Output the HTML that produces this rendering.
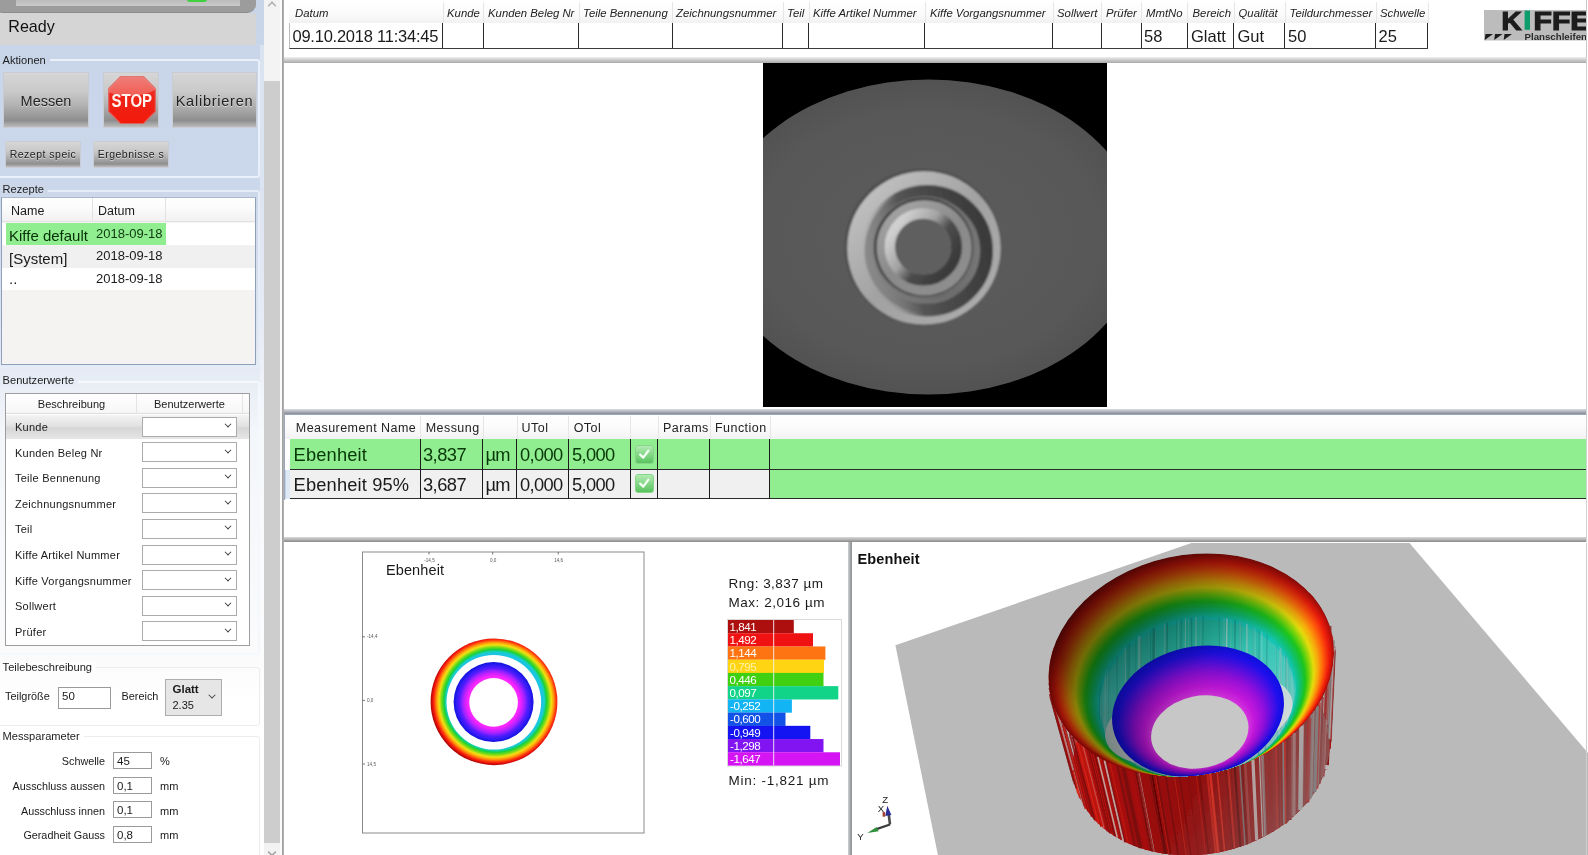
<!DOCTYPE html>
<html lang="de"><head><meta charset="utf-8"><title>Kiffe Planschleifen – Ebenheit</title>
<style>
*{box-sizing:border-box;margin:0;padding:0}
html,body{width:1588px;height:855px;overflow:hidden;background:#fff}
body{font-family:"Liberation Sans",sans-serif;color:#1a1a1a;position:relative}
#app{position:absolute;left:0;top:0;width:1588px;height:855px;overflow:hidden;background:#fff;will-change:transform;-webkit-font-smoothing:antialiased}
.abs{position:absolute}
.t{position:absolute;white-space:nowrap;line-height:1}
/* left panel */
#left{left:0;top:0;width:264px;height:855px;background:linear-gradient(to bottom,#c8d5e9 0px,#cbd7ea 180px,#dde5f1 340px,#e9eef6 385px,#f3f6fa 430px,#fbfbfc 660px,#ffffff 700px)}
.gl{font-size:11.1px;color:#1c1c1c}
.btn{position:absolute;border:1px solid #c9cdd3;background:linear-gradient(to bottom,#d6d6d6 0%,#c9c9c9 35%,#b2b2b2 60%,#8e8e8e 88%,#bdbdbd 100%);text-align:center;color:#222;text-shadow:0 1px 0 rgba(255,255,255,.55)}
.cmb{position:absolute;left:142px;width:95px;height:20px;background:#fff;border:1px solid #ababab}
.cmb i{position:absolute;right:5.5px;top:3.5px;width:6px;height:6px;border-right:1.6px solid #333;border-bottom:1.6px solid #333;transform:rotate(45deg) scale(.8);transform-origin:center}
.tb{position:absolute;background:#fff;border:1px solid #9a9a9a;font-size:12px;line-height:1}
.gb{position:absolute;border:1px solid rgba(255,255,255,.9);border-radius:3px}
</style></head>
<body><div id="app">
<div class="abs" style="left:289px;top:0;width:1139px;height:23px;background:linear-gradient(#ffffff,#fbfbfb 60%,#f1f1f1)"></div>
<div class="abs" style="left:442.5px;top:2px;width:1px;height:21px;background:#e6e6e6"></div>
<div class="abs" style="left:483.0px;top:2px;width:1px;height:21px;background:#e6e6e6"></div>
<div class="abs" style="left:578.5px;top:2px;width:1px;height:21px;background:#e6e6e6"></div>
<div class="abs" style="left:672.0px;top:2px;width:1px;height:21px;background:#e6e6e6"></div>
<div class="abs" style="left:782.5px;top:2px;width:1px;height:21px;background:#e6e6e6"></div>
<div class="abs" style="left:808.5px;top:2px;width:1px;height:21px;background:#e6e6e6"></div>
<div class="abs" style="left:924.5px;top:2px;width:1px;height:21px;background:#e6e6e6"></div>
<div class="abs" style="left:1052.5px;top:2px;width:1px;height:21px;background:#e6e6e6"></div>
<div class="abs" style="left:1101.0px;top:2px;width:1px;height:21px;background:#e6e6e6"></div>
<div class="abs" style="left:1141.0px;top:2px;width:1px;height:21px;background:#e6e6e6"></div>
<div class="abs" style="left:1187.0px;top:2px;width:1px;height:21px;background:#e6e6e6"></div>
<div class="abs" style="left:1233.5px;top:2px;width:1px;height:21px;background:#e6e6e6"></div>
<div class="abs" style="left:1284.5px;top:2px;width:1px;height:21px;background:#e6e6e6"></div>
<div class="abs" style="left:1375.5px;top:2px;width:1px;height:21px;background:#e6e6e6"></div>
<div class="abs" style="left:1427.5px;top:2px;width:1px;height:21px;background:#e6e6e6"></div>
<div class="t" style="left:295.0px;top:8.4px;font-size:11.35px;font-style:italic;color:#222">Datum</div>
<div class="t" style="left:447.0px;top:8.4px;font-size:11.35px;font-style:italic;color:#222">Kunde</div>
<div class="t" style="left:488.0px;top:8.4px;font-size:11.35px;font-style:italic;color:#222">Kunden Beleg Nr</div>
<div class="t" style="left:583.0px;top:8.4px;font-size:11.35px;font-style:italic;color:#222">Teile Bennenung</div>
<div class="t" style="left:676.0px;top:8.4px;font-size:11.35px;font-style:italic;color:#222">Zeichnungsnummer</div>
<div class="t" style="left:787.0px;top:8.4px;font-size:11.35px;font-style:italic;color:#222">Teil</div>
<div class="t" style="left:813.0px;top:8.4px;font-size:11.35px;font-style:italic;color:#222">Kiffe Artikel Nummer</div>
<div class="t" style="left:930.0px;top:8.4px;font-size:11.35px;font-style:italic;color:#222">Kiffe Vorgangsnummer</div>
<div class="t" style="left:1057.0px;top:8.4px;font-size:11.35px;font-style:italic;color:#222">Sollwert</div>
<div class="t" style="left:1106.0px;top:8.4px;font-size:11.35px;font-style:italic;color:#222">Prüfer</div>
<div class="t" style="left:1146.0px;top:8.4px;font-size:11.35px;font-style:italic;color:#222">MmtNo</div>
<div class="t" style="left:1192.5px;top:8.4px;font-size:11.35px;font-style:italic;color:#222">Bereich</div>
<div class="t" style="left:1238.5px;top:8.4px;font-size:11.35px;font-style:italic;color:#222">Qualität</div>
<div class="t" style="left:1289.5px;top:8.4px;font-size:11.35px;font-style:italic;color:#222">Teildurchmesser</div>
<div class="t" style="left:1380.0px;top:8.4px;font-size:11.35px;font-style:italic;color:#222">Schwelle</div>
<div class="abs" style="left:289px;top:23px;width:1139px;height:25.5px;border-left:1px solid #bdbdbd;border-bottom:1.6px solid #3a3a3a;background:#fff"></div>
<div class="abs" style="left:442.2px;top:23px;width:1.2px;height:25px;background:#2a2a2a"></div>
<div class="abs" style="left:482.7px;top:23px;width:1.2px;height:25px;background:#2a2a2a"></div>
<div class="abs" style="left:578.2px;top:23px;width:1.2px;height:25px;background:#2a2a2a"></div>
<div class="abs" style="left:671.7px;top:23px;width:1.2px;height:25px;background:#2a2a2a"></div>
<div class="abs" style="left:782.2px;top:23px;width:1.2px;height:25px;background:#2a2a2a"></div>
<div class="abs" style="left:808.2px;top:23px;width:1.2px;height:25px;background:#2a2a2a"></div>
<div class="abs" style="left:924.2px;top:23px;width:1.2px;height:25px;background:#2a2a2a"></div>
<div class="abs" style="left:1052.2px;top:23px;width:1.2px;height:25px;background:#2a2a2a"></div>
<div class="abs" style="left:1100.7px;top:23px;width:1.2px;height:25px;background:#2a2a2a"></div>
<div class="abs" style="left:1140.7px;top:23px;width:1.2px;height:25px;background:#2a2a2a"></div>
<div class="abs" style="left:1186.7px;top:23px;width:1.2px;height:25px;background:#2a2a2a"></div>
<div class="abs" style="left:1233.2px;top:23px;width:1.2px;height:25px;background:#2a2a2a"></div>
<div class="abs" style="left:1284.2px;top:23px;width:1.2px;height:25px;background:#2a2a2a"></div>
<div class="abs" style="left:1375.2px;top:23px;width:1.2px;height:25px;background:#2a2a2a"></div>
<div class="abs" style="left:1427.2px;top:23px;width:1.2px;height:25px;background:#2a2a2a"></div>
<div class="t" style="left:292.5px;top:28.4px;font-size:16.5px;color:#1a1a1a;letter-spacing:-.24px">09.10.2018 11:34:45</div>
<div class="t" style="left:1144.0px;top:28.4px;font-size:16.5px;color:#1a1a1a;">58</div>
<div class="t" style="left:1191.0px;top:28.4px;font-size:16.5px;color:#1a1a1a;">Glatt</div>
<div class="t" style="left:1237.5px;top:28.4px;font-size:16.5px;color:#1a1a1a;">Gut</div>
<div class="t" style="left:1288.0px;top:28.4px;font-size:16.5px;color:#1a1a1a;">50</div>
<div class="t" style="left:1378.5px;top:28.4px;font-size:16.5px;color:#1a1a1a;">25</div>
<svg class="abs" style="left:1480px;top:6px" width="108" height="40" viewBox="1480 6 108 40"><rect x="1484" y="10" width="102" height="30.5" fill="#bcbcbc"/><text x="1501.5" y="30" font-family="Liberation Sans, sans-serif" font-weight="bold" font-size="28" fill="#1c1c1c" stroke="#1c1c1c" stroke-width="1.3" textLength="20" lengthAdjust="spacingAndGlyphs" transform="translate(0 30) scale(1 .92) translate(0 -30)">K</text><rect x="1524.6" y="10.6" width="5.4" height="19.2" fill="#0d9d6c"/><text x="1533.5" y="30" font-family="Liberation Sans, sans-serif" font-weight="bold" font-size="28" fill="#1c1c1c" stroke="#1c1c1c" stroke-width="1.3" textLength="57" lengthAdjust="spacingAndGlyphs" transform="translate(0 30) scale(1 .92) translate(0 -30)">FFE</text><path d="M1485.5 34 h7.5 l-7.5 6z M1495 34 h7.5 l-7.5 6z M1504.5 34 h7.5 l-7.5 6z" fill="#1c1c1c" transform="skewX(-8) translate(4.8 0)"/><text x="1524.5" y="39.6" font-family="Liberation Sans, sans-serif" font-weight="bold" font-size="8.6" fill="#2a2a2a" textLength="62.5" lengthAdjust="spacingAndGlyphs">Planschleifen</text></svg>
<div class="abs" style="left:1586px;top:0;width:2px;height:57px;background:#fff;border-left:1px solid #c9c9c9"></div>
<div class="abs" style="left:284px;top:57px;width:1302px;height:6px;background:linear-gradient(#f0f0f0,#d2d2d2 40%,#a9a9a9)"></div>
<svg class="abs" style="left:763px;top:63px" width="344" height="344" viewBox="763 63 344 344">
<defs><radialGradient id="cbg" cx="50%" cy="50%" r="50%"><stop offset="0" stop-color="#5c5c5c"/><stop offset=".8" stop-color="#585858"/><stop offset="1" stop-color="#525252"/></radialGradient><linearGradient id="r1" x1="0.15" y1="0.15" x2="0.85" y2="0.85"><stop offset="0" stop-color="#bebebe"/><stop offset=".5" stop-color="#a2a2a2"/><stop offset="1" stop-color="#aaaaaa"/></linearGradient><linearGradient id="r2" x1="0" y1="0.62" x2="1" y2="0.38"><stop offset="0" stop-color="#8a8a8a" stop-opacity="0"/><stop offset=".16" stop-color="#707070" stop-opacity=".25"/><stop offset=".36" stop-color="#525252" stop-opacity=".95"/><stop offset=".6" stop-color="#484848"/><stop offset="1" stop-color="#3a3a3a"/></linearGradient><linearGradient id="r5" x1="0" y1="0.55" x2="1" y2="0.45"><stop offset="0" stop-color="#8a8a8a"/><stop offset=".2" stop-color="#808080"/><stop offset=".45" stop-color="#747474"/><stop offset=".7" stop-color="#6c6c6c"/><stop offset="1" stop-color="#808080"/></linearGradient><linearGradient id="r6" x1="0" y1="0.55" x2="1" y2="0.45"><stop offset="0" stop-color="#7e7e7e"/><stop offset=".3" stop-color="#747474"/><stop offset=".6" stop-color="#6a6a6a"/><stop offset="1" stop-color="#747474"/></linearGradient><linearGradient id="r3" x1="0.2" y1="0.1" x2="0.8" y2="0.9"><stop offset="0" stop-color="#a2a2a2"/><stop offset=".5" stop-color="#8a8a8a"/><stop offset="1" stop-color="#8e8e8e"/></linearGradient><linearGradient id="r4" x1="0.1" y1="0.2" x2="0.9" y2="0.8"><stop offset="0" stop-color="#cfcfcf"/><stop offset=".38" stop-color="#a2a2a2"/><stop offset=".62" stop-color="#4c4c4c"/><stop offset="1" stop-color="#3a3a3a"/></linearGradient><filter id="bl" x="-10%" y="-10%" width="120%" height="120%"><feGaussianBlur stdDeviation="1.3"/></filter><clipPath id="cclip"><rect x="763" y="63" width="344" height="344"/></clipPath></defs>
<rect x="763" y="63" width="344" height="344" fill="#000"/>
<g clip-path="url(#cclip)">
<ellipse cx="928.5" cy="237" rx="212.5" ry="157.5" fill="url(#cbg)"/>
<g filter="url(#bl)">
<circle cx="923.2" cy="247.2" r="78.3" fill="#484848"/>
<circle cx="924" cy="248" r="76.8" fill="url(#r1)"/>
<circle cx="927.5" cy="250.5" r="63" fill="url(#r5)"/>
<circle cx="927.2" cy="250.8" r="59.3" fill="none" stroke="url(#r2)" stroke-width="13"/>
<circle cx="925" cy="248.5" r="52.5" fill="url(#r6)"/>
<circle cx="923.6" cy="247.2" r="49.6" fill="#404040"/>
<circle cx="924.2" cy="247.8" r="47.6" fill="url(#r3)"/>
<circle cx="923.3" cy="246.9" r="33.2" fill="none" stroke="url(#r4)" stroke-width="11"/>
<circle cx="923" cy="246.7" r="28" fill="#5f5f5f"/>
</g></g></svg>
<div class="abs" style="left:284px;top:408.5px;width:1302px;height:5.6px;background:linear-gradient(#d8dbe0,#b6b9c0 45%,#868992)"></div>
<div class="abs" style="left:284px;top:414px;width:1302.5px;height:86px;border:1px solid #9aa7bd;border-bottom:none;background:#fff"></div>
<div class="abs" style="left:285px;top:415px;width:1300.5px;height:24px;background:linear-gradient(#ffffff,#fbfbfb 55%,#f2f2f2)"></div>
<div class="t" style="left:295.8px;top:421.5px;font-size:12.5px;color:#222;letter-spacing:.45px">Measurement Name</div>
<div class="t" style="left:425.7px;top:421.5px;font-size:12.5px;color:#222;letter-spacing:.45px">Messung</div>
<div class="t" style="left:521.6px;top:421.5px;font-size:12.5px;color:#222;letter-spacing:.45px">UTol</div>
<div class="t" style="left:573.7px;top:421.5px;font-size:12.5px;color:#222;letter-spacing:.45px">OTol</div>
<div class="t" style="left:663.0px;top:421.5px;font-size:12.5px;color:#222;letter-spacing:.45px">Params</div>
<div class="t" style="left:715.0px;top:421.5px;font-size:12.5px;color:#222;letter-spacing:.45px">Function</div>
<div class="abs" style="left:420.0px;top:416px;width:1px;height:23px;background:#e6e6e6"></div>
<div class="abs" style="left:482.5px;top:416px;width:1px;height:23px;background:#e6e6e6"></div>
<div class="abs" style="left:516.5px;top:416px;width:1px;height:23px;background:#e6e6e6"></div>
<div class="abs" style="left:568.0px;top:416px;width:1px;height:23px;background:#e6e6e6"></div>
<div class="abs" style="left:630.0px;top:416px;width:1px;height:23px;background:#e6e6e6"></div>
<div class="abs" style="left:657.5px;top:416px;width:1px;height:23px;background:#e6e6e6"></div>
<div class="abs" style="left:709.5px;top:416px;width:1px;height:23px;background:#e6e6e6"></div>
<div class="abs" style="left:769.5px;top:416px;width:1px;height:23px;background:#e6e6e6"></div>
<div class="abs" style="left:290px;top:439px;width:1295.5px;height:30px;background:#90ee90"></div>
<div class="abs" style="left:290px;top:469.5px;width:480px;height:29px;background:#f0f0f0"></div>
<div class="abs" style="left:769.5px;top:469.5px;width:816px;height:29px;background:#90ee90"></div>
<div class="abs" style="left:290px;top:468.8px;width:1295.5px;height:1.2px;background:#2b2b2b"></div>
<div class="abs" style="left:290px;top:497.8px;width:1295.5px;height:1.4px;background:#2b2b2b"></div>
<div class="abs" style="left:419.8px;top:439px;width:1.2px;height:59.5px;background:#1c1c1c"></div>
<div class="abs" style="left:482.3px;top:439px;width:1.2px;height:59.5px;background:#1c1c1c"></div>
<div class="abs" style="left:516.3px;top:439px;width:1.2px;height:59.5px;background:#1c1c1c"></div>
<div class="abs" style="left:567.8px;top:439px;width:1.2px;height:59.5px;background:#1c1c1c"></div>
<div class="abs" style="left:629.8px;top:439px;width:1.2px;height:59.5px;background:#1c1c1c"></div>
<div class="abs" style="left:657.3px;top:439px;width:1.2px;height:59.5px;background:#1c1c1c"></div>
<div class="abs" style="left:709.3px;top:439px;width:1.2px;height:59.5px;background:#1c1c1c"></div>
<div class="abs" style="left:769.3px;top:439px;width:1.2px;height:59.5px;background:#1c1c1c"></div>
<div class="t" style="left:293.6px;top:446.1px;font-size:18.3px;color:#083808;letter-spacing:.15px">Ebenheit</div>
<div class="t" style="left:423px;top:446.1px;font-size:18.3px;letter-spacing:-.55px;color:#083808">3,837</div>
<div class="t" style="left:485.4px;top:446.1px;font-size:18.3px;letter-spacing:-.6px;color:#083808">µm</div>
<div class="t" style="left:520px;top:446.1px;font-size:18.3px;color:#083808;letter-spacing:-.62px">0,000</div>
<div class="t" style="left:572px;top:446.1px;font-size:18.3px;color:#083808;letter-spacing:-.62px">5,000</div>
<svg class="abs" style="left:634.5px;top:444.8px" width="19" height="19" viewBox="0 0 19 19"><defs><linearGradient id="ck0" x1="0" y1="0" x2="0" y2="1"><stop offset="0" stop-color="#b4ecb4"/><stop offset="1" stop-color="#56c25c"/></linearGradient></defs><rect x=".5" y=".5" width="18" height="18" rx="2.5" fill="url(#ck0)" stroke="#86d68a"/><path d="M5.2 9.6 L8.3 12.6 L13.4 5.6" fill="none" stroke="#f4fff4" stroke-width="2.3" stroke-linecap="round" stroke-linejoin="round"/></svg>
<div class="t" style="left:293.6px;top:475.9px;font-size:18.3px;color:#1a1a1a;letter-spacing:.15px">Ebenheit 95%</div>
<div class="t" style="left:423px;top:475.9px;font-size:18.3px;letter-spacing:-.55px;color:#1a1a1a">3,687</div>
<div class="t" style="left:485.4px;top:475.9px;font-size:18.3px;letter-spacing:-.6px;color:#1a1a1a">µm</div>
<div class="t" style="left:520px;top:475.9px;font-size:18.3px;color:#1a1a1a;letter-spacing:-.62px">0,000</div>
<div class="t" style="left:572px;top:475.9px;font-size:18.3px;color:#1a1a1a;letter-spacing:-.62px">5,000</div>
<svg class="abs" style="left:634.5px;top:474.4px" width="19" height="19" viewBox="0 0 19 19"><defs><linearGradient id="ck1" x1="0" y1="0" x2="0" y2="1"><stop offset="0" stop-color="#b4ecb4"/><stop offset="1" stop-color="#56c25c"/></linearGradient></defs><rect x=".5" y=".5" width="18" height="18" rx="2.5" fill="url(#ck1)" stroke="#86d68a"/><path d="M5.2 9.6 L8.3 12.6 L13.4 5.6" fill="none" stroke="#f4fff4" stroke-width="2.3" stroke-linecap="round" stroke-linejoin="round"/></svg>
<div class="abs" style="left:285px;top:469.5px;width:5px;height:29px;background:#dfe9f6;border-left:1px solid #c3d2e6"></div>
<div class="abs" style="left:284px;top:536.6px;width:1302px;height:5.8px;background:linear-gradient(#dadada,#b4b4b4 50%,#8a8a8a)"></div>
<div class="abs" style="left:1586px;top:57px;width:1px;height:485px;background:#d2d2d2"></div>
<div class="abs" style="left:847.7px;top:542.3px;width:4.6px;height:313px;background:linear-gradient(to right,#cfd2d6,#a8aaae 50%,#8e8e90)"></div>
<svg class="abs" style="left:284px;top:543px" width="564" height="312" viewBox="284 543 564 312">
<defs><radialGradient id="og" gradientUnits="userSpaceOnUse" cx="495.2" cy="700.9" r="64.2" fx="495.2" fy="700.9"><stop offset="0.745" stop-color="#1fc4e4"/><stop offset="0.768" stop-color="#18cfc0"/><stop offset="0.80" stop-color="#19d13c"/><stop offset="0.84" stop-color="#7fdc14"/><stop offset="0.875" stop-color="#f4e012"/><stop offset="0.912" stop-color="#ff9a0a"/><stop offset="0.945" stop-color="#ff4208"/><stop offset="0.972" stop-color="#ee1208"/><stop offset="1" stop-color="#b00606"/></radialGradient><radialGradient id="ig" gradientUnits="userSpaceOnUse" cx="493.7" cy="702.2" r="40"><stop offset="0.60" stop-color="#ff2cff"/><stop offset="0.67" stop-color="#ee24ff"/><stop offset="0.76" stop-color="#b022ff"/><stop offset="0.86" stop-color="#521eff"/><stop offset="0.94" stop-color="#2a1af0"/><stop offset="1" stop-color="#1212dd"/></radialGradient><filter id="b5"><feGaussianBlur stdDeviation=".45"/></filter></defs>
<rect x="362.5" y="552" width="281.5" height="281" fill="#fff" stroke="#8a8a8a" stroke-width="1"/>
<text x="386" y="575.2" font-family="Liberation Sans, sans-serif" font-size="14.5" fill="#1a1a1a" textLength="58" lengthAdjust="spacing">Ebenheit</text>
<line x1="429.0" y1="552" x2="429.0" y2="554.5" stroke="#555" stroke-width=".8"/>
<text x="429.5" y="562" text-anchor="middle" font-family="Liberation Sans, sans-serif" font-size="4.6" fill="#555">-14,5</text>
<line x1="492.7" y1="552" x2="492.7" y2="554.5" stroke="#555" stroke-width=".8"/>
<text x="493.2" y="562" text-anchor="middle" font-family="Liberation Sans, sans-serif" font-size="4.6" fill="#555">0,0</text>
<line x1="558.2" y1="552" x2="558.2" y2="554.5" stroke="#555" stroke-width=".8"/>
<text x="558.7" y="562" text-anchor="middle" font-family="Liberation Sans, sans-serif" font-size="4.6" fill="#555">14,6</text>
<line x1="362.5" y1="636.8" x2="365" y2="636.8" stroke="#555" stroke-width=".8"/>
<text x="367" y="638.4" font-family="Liberation Sans, sans-serif" font-size="4.6" fill="#555">-14,4</text>
<line x1="362.5" y1="700.4" x2="365" y2="700.4" stroke="#555" stroke-width=".8"/>
<text x="367" y="702.0" font-family="Liberation Sans, sans-serif" font-size="4.6" fill="#555">0,0</text>
<line x1="362.5" y1="764.0" x2="365" y2="764.0" stroke="#555" stroke-width=".8"/>
<text x="367" y="765.6" font-family="Liberation Sans, sans-serif" font-size="4.6" fill="#555">14,5</text>
<g filter="url(#b5)">
<circle cx="494" cy="701.8" r="63.4" fill="url(#og)"/>
<circle cx="493.8" cy="702.3" r="47.3" fill="#fff"/>
<circle cx="493.6" cy="702.1" r="40" fill="url(#ig)"/>
<circle cx="493.6" cy="702.4" r="24.3" fill="#fff"/>
</g>
<text x="728.5" y="587.8" font-family="Liberation Sans, sans-serif" font-size="13.5" fill="#1a1a1a" textLength="94.5" lengthAdjust="spacing">Rng: 3,837 µm</text>
<text x="728.5" y="606.8" font-family="Liberation Sans, sans-serif" font-size="13.5" fill="#1a1a1a" textLength="96" lengthAdjust="spacing">Max: 2,016 µm</text>
<text x="728.5" y="784.8" font-family="Liberation Sans, sans-serif" font-size="13.5" fill="#1a1a1a" textLength="100" lengthAdjust="spacing">Min: -1,821 µm</text>
<rect x="727.5" y="619.5" width="114" height="146.5" fill="#fff" stroke="#d9d9d9" stroke-width="1"/>
<rect x="728" y="620.00" width="65.8" height="13.33" fill="#ad0f0f"/>
<text x="729.5" y="630.83" font-family="Liberation Sans, sans-serif" font-size="11.6" letter-spacing="-.45" fill="#fff">1,841</text>
<rect x="728" y="633.23" width="85.0" height="13.33" fill="#f01212"/>
<text x="729.5" y="644.05" font-family="Liberation Sans, sans-serif" font-size="11.6" letter-spacing="-.45" fill="#fff">1,492</text>
<rect x="728" y="646.45" width="97.4" height="13.33" fill="#ff7412"/>
<text x="729.5" y="657.28" font-family="Liberation Sans, sans-serif" font-size="11.6" letter-spacing="-.45" fill="#fff">1,144</text>
<rect x="728" y="659.68" width="96.0" height="13.33" fill="#ffd412"/>
<text x="729.5" y="670.51" font-family="Liberation Sans, sans-serif" font-size="11.6" letter-spacing="-.45" fill="#fff3a8">0,795</text>
<rect x="728" y="672.91" width="95.5" height="13.33" fill="#3fd012"/>
<text x="729.5" y="683.74" font-family="Liberation Sans, sans-serif" font-size="11.6" letter-spacing="-.45" fill="#fff">0,446</text>
<rect x="728" y="686.14" width="110.3" height="13.33" fill="#12d488"/>
<text x="729.5" y="696.96" font-family="Liberation Sans, sans-serif" font-size="11.6" letter-spacing="-.45" fill="#fff">0,097</text>
<rect x="728" y="699.36" width="63.9" height="13.33" fill="#12b4f4"/>
<text x="730.0" y="710.19" font-family="Liberation Sans, sans-serif" font-size="11.6" letter-spacing="-.45" fill="#fff">-0,252</text>
<rect x="728" y="712.59" width="57.5" height="13.33" fill="#1252e6"/>
<text x="730.0" y="723.42" font-family="Liberation Sans, sans-serif" font-size="11.6" letter-spacing="-.45" fill="#fff">-0,600</text>
<rect x="728" y="725.82" width="82.3" height="13.33" fill="#1414f2"/>
<text x="730.0" y="736.65" font-family="Liberation Sans, sans-serif" font-size="11.6" letter-spacing="-.45" fill="#fff">-0,949</text>
<rect x="728" y="739.05" width="95.5" height="13.33" fill="#8214f2"/>
<text x="730.0" y="749.87" font-family="Liberation Sans, sans-serif" font-size="11.6" letter-spacing="-.45" fill="#fff">-1,298</text>
<rect x="728" y="752.27" width="112.0" height="13.33" fill="#d414f2"/>
<text x="730.0" y="763.10" font-family="Liberation Sans, sans-serif" font-size="11.6" letter-spacing="-.45" fill="#fff">-1,647</text>
<line x1="773.7" y1="620" x2="773.7" y2="765.5" stroke="#f4f4f4" stroke-width=".9"/>
</svg>
<svg class="abs" style="left:853px;top:542.5px" width="735" height="312.5" viewBox="853 542.5 735 312.5">
<defs><linearGradient id="lit" gradientUnits="userSpaceOnUse" x1="1190" y1="553" x2="1205" y2="665"><stop offset="0" stop-color="#000" stop-opacity=".42"/><stop offset=".5" stop-color="#000" stop-opacity=".26"/><stop offset="1" stop-color="#000" stop-opacity="0"/></linearGradient><linearGradient id="lit2" gradientUnits="userSpaceOnUse" x1="1049" y1="690" x2="1265" y2="655"><stop offset="0" stop-color="#000" stop-opacity=".3"/><stop offset=".12" stop-color="#000" stop-opacity=".42"/><stop offset=".55" stop-color="#000" stop-opacity=".2"/><stop offset="1" stop-color="#000" stop-opacity="0"/></linearGradient><linearGradient id="gapw" gradientUnits="userSpaceOnUse" x1="0" y1="664" x2="0" y2="770"><stop offset="0" stop-color="#9cd0cc" stop-opacity="0"/><stop offset=".3" stop-color="#cfdcdb" stop-opacity=".85"/><stop offset="1" stop-color="#dedede"/></linearGradient><linearGradient id="gapg" gradientUnits="userSpaceOnUse" x1="0" y1="625" x2="0" y2="765"><stop offset="0" stop-color="#20c0a8"/><stop offset=".4" stop-color="#44c8bc"/><stop offset=".7" stop-color="#6cc8c0"/><stop offset="1" stop-color="#9cccc8"/></linearGradient><linearGradient id="wallg" gradientUnits="userSpaceOnUse" x1="1050" y1="0" x2="1340" y2="0"><stop offset="0" stop-color="#e0240e"/><stop offset=".10" stop-color="#bc1410"/><stop offset=".3" stop-color="#9a0e0e"/><stop offset=".55" stop-color="#8e0c0c"/><stop offset=".8" stop-color="#8e1a18"/><stop offset="1" stop-color="#7a2624"/></linearGradient><linearGradient id="wallsh" gradientUnits="userSpaceOnUse" x1="1215" y1="740" x2="1325" y2="805"><stop offset="0" stop-color="#9a9a9a" stop-opacity="0"/><stop offset=".6" stop-color="#949090" stop-opacity=".16"/><stop offset="1" stop-color="#8c8888" stop-opacity=".34"/></linearGradient><clipPath id="rimc"><ellipse cx="1191.3" cy="664.5" rx="144.0" ry="109.8" transform="rotate(-12.0 1191.3 664.5)"/></clipPath><clipPath id="oinc"><ellipse cx="1197.0" cy="696.5" rx="99.8" ry="79.5" transform="rotate(-12.0 1197.0 696.5)"/></clipPath><filter id="b3"><feGaussianBlur stdDeviation=".6"/></filter></defs>
<polygon points="895.4,644.7 1191.5,542.5 1409.5,542.5 1588,752.6 1588,855 938,855" fill="#bababa"/>
<text x="857.6" y="563" font-family="Liberation Sans, sans-serif" font-weight="bold" font-size="14.5" fill="#111" textLength="62" lengthAdjust="spacing">Ebenheit</text>
<g filter="url(#b3)">
<polygon points="1309.3,592.0 1313.6,596.8 1317.5,601.9 1321.0,607.1 1324.1,612.5 1326.8,618.1 1329.1,623.8 1331.0,629.7 1332.4,635.6 1333.4,641.7 1333.9,647.8 1334.0,653.9 1333.6,660.1 1332.8,666.4 1331.6,672.6 1329.9,678.8 1327.8,684.9 1325.3,691.0 1322.4,697.0 1319.0,702.9 1315.3,708.6 1311.2,714.3 1306.7,719.8 1301.8,725.1 1296.6,730.2 1291.1,735.1 1285.2,739.8 1279.1,744.3 1272.7,748.5 1266.0,752.4 1259.1,756.1 1252.0,759.5 1244.8,762.6 1237.3,765.4 1229.7,767.9 1222.0,770.1 1214.2,771.9 1206.3,773.4 1198.4,774.6 1190.4,775.4 1182.5,775.9 1174.6,776.0 1166.7,775.8 1158.9,775.2 1151.2,774.3 1143.6,773.1 1136.2,771.5 1129.0,769.6 1121.9,767.3 1115.1,764.8 1108.5,761.9 1102.1,758.7 1096.1,755.2 1090.3,751.5 1084.9,747.5 1079.7,743.2 1075.0,738.6 1070.5,733.9 1066.5,728.9 1062.9,723.7 1059.6,718.4 1056.8,712.9 1054.3,707.2 1052.3,701.4 1050.8,695.5 1049.6,689.5 1048.9,683.4 1048.7,677.2 1048.9,671.0 1049.5,664.8 1050.6,658.6 1052.1,652.4 1054.1,646.2 1077.8,738.1 1076.1,743.6 1074.7,749.2 1073.7,754.8 1073.1,760.4 1073.0,765.9 1073.2,771.5 1073.8,777.0 1074.8,782.4 1076.2,787.7 1078.0,792.9 1080.2,798.0 1082.8,803.0 1085.7,807.8 1089.0,812.5 1092.6,817.0 1096.6,821.2 1100.9,825.3 1105.5,829.2 1110.4,832.8 1115.6,836.2 1121.1,839.3 1126.8,842.1 1132.7,844.7 1138.9,847.0 1145.2,849.1 1151.7,850.8 1158.4,852.2 1165.2,853.3 1172.1,854.1 1179.2,854.7 1186.2,854.8 1193.4,854.7 1200.5,854.3 1207.7,853.6 1214.8,852.5 1221.9,851.2 1228.9,849.5 1235.9,847.6 1242.7,845.3 1249.4,842.8 1256.0,840.0 1262.4,837.0 1268.6,833.6 1274.6,830.1 1280.3,826.3 1285.8,822.3 1291.1,818.0 1296.1,813.6 1300.8,809.0 1305.1,804.2 1309.2,799.3 1312.9,794.2 1316.3,789.0 1319.3,783.7 1321.9,778.3 1324.2,772.9 1326.1,767.3 1327.6,761.8 1328.7,756.2 1329.4,750.6 1329.7,745.0 1329.6,739.4 1329.2,733.9 1328.3,728.5 1327.0,723.1 1325.3,717.9 1323.3,712.7 1320.9,707.7 1318.1,702.8 1314.9,698.1 1311.4,693.6 1307.5,689.2" fill="url(#wallg)"/>
<ellipse cx="1201.3" cy="754.5" rx="129.6" ry="98.8" transform="rotate(-12.0 1201.3 754.5)" fill="url(#wallg)"/>
<line x1="1290.0" y1="736.0" x2="1290.1" y2="818.9" stroke="#a09898" stroke-width="3.2" stroke-opacity="0.55"/>
<line x1="1333.8" y1="646.3" x2="1329.6" y2="738.2" stroke="#8a1414" stroke-width="1.0" stroke-opacity="0.85"/>
<line x1="1173.9" y1="776.0" x2="1185.7" y2="854.8" stroke="#5e0606" stroke-width="1.2" stroke-opacity="0.55"/>
<line x1="1334.0" y1="651.4" x2="1329.7" y2="742.7" stroke="#c6c0c0" stroke-width="1.0" stroke-opacity="0.70"/>
<line x1="1334.0" y1="653.2" x2="1329.7" y2="744.4" stroke="#c6c0c0" stroke-width="1.0" stroke-opacity="0.55"/>
<line x1="1051.6" y1="698.7" x2="1075.5" y2="785.3" stroke="#b41410" stroke-width="0.8" stroke-opacity="1.00"/>
<line x1="1332.8" y1="637.8" x2="1328.6" y2="730.5" stroke="#c41812" stroke-width="1.0" stroke-opacity="0.70"/>
<line x1="1301.3" y1="725.5" x2="1300.3" y2="809.4" stroke="#a09898" stroke-width="4.0" stroke-opacity="0.55"/>
<line x1="1179.7" y1="776.0" x2="1190.9" y2="854.8" stroke="#5e0606" stroke-width="1.2" stroke-opacity="0.55"/>
<line x1="1174.5" y1="776.0" x2="1186.2" y2="854.8" stroke="#e02c1c" stroke-width="1.6" stroke-opacity="0.55"/>
<line x1="1191.0" y1="775.3" x2="1201.0" y2="854.3" stroke="#8e0e0e" stroke-width="3.0" stroke-opacity="0.55"/>
<line x1="1156.6" y1="775.0" x2="1170.0" y2="853.9" stroke="#7c0a0a" stroke-width="3.0" stroke-opacity="1.00"/>
<line x1="1090.3" y1="751.4" x2="1110.4" y2="832.7" stroke="#7c0a0a" stroke-width="3.0" stroke-opacity="1.00"/>
<line x1="1275.9" y1="746.4" x2="1277.4" y2="828.2" stroke="#c41812" stroke-width="1.6" stroke-opacity="0.70"/>
<line x1="1334.0" y1="649.9" x2="1329.7" y2="741.4" stroke="#8c8080" stroke-width="4.0" stroke-opacity="1.00"/>
<line x1="1062.8" y1="723.7" x2="1085.6" y2="807.7" stroke="#7c0a0a" stroke-width="1.6" stroke-opacity="0.55"/>
<line x1="1333.2" y1="663.7" x2="1329.0" y2="753.7" stroke="#c6c0c0" stroke-width="1.6" stroke-opacity="0.85"/>
<line x1="1330.6" y1="676.6" x2="1326.7" y2="765.4" stroke="#8e0e0e" stroke-width="3.2" stroke-opacity="0.55"/>
<line x1="1050.3" y1="693.4" x2="1074.4" y2="780.5" stroke="#8e0e0e" stroke-width="3.0" stroke-opacity="0.85"/>
<line x1="1284.1" y1="740.7" x2="1284.8" y2="823.1" stroke="#a81010" stroke-width="4.0" stroke-opacity="1.00"/>
<line x1="1175.3" y1="776.0" x2="1186.9" y2="854.8" stroke="#7c0a0a" stroke-width="0.8" stroke-opacity="0.55"/>
<line x1="1051.8" y1="699.7" x2="1075.8" y2="786.2" stroke="#7c0a0a" stroke-width="0.8" stroke-opacity="0.55"/>
<line x1="1107.3" y1="761.3" x2="1125.7" y2="841.6" stroke="#a81010" stroke-width="3.0" stroke-opacity="1.00"/>
<line x1="1302.9" y1="723.9" x2="1301.7" y2="808.0" stroke="#c6c0c0" stroke-width="2.4" stroke-opacity="0.55"/>
<line x1="1052.3" y1="701.2" x2="1076.2" y2="787.5" stroke="#6e0808" stroke-width="1.2" stroke-opacity="0.55"/>
<line x1="1217.2" y1="771.2" x2="1224.6" y2="850.6" stroke="#e02c1c" stroke-width="1.6" stroke-opacity="0.70"/>
<line x1="1104.5" y1="759.9" x2="1123.2" y2="840.4" stroke="#c0a09c" stroke-width="2.2" stroke-opacity="1.00"/>
<line x1="1334.0" y1="649.4" x2="1329.7" y2="740.9" stroke="#8e0e0e" stroke-width="3.2" stroke-opacity="0.85"/>
<line x1="1061.1" y1="721.0" x2="1084.1" y2="805.3" stroke="#c0a09c" stroke-width="3.0" stroke-opacity="0.85"/>
<line x1="1117.4" y1="765.6" x2="1134.8" y2="845.5" stroke="#6e0808" stroke-width="2.2" stroke-opacity="0.70"/>
<line x1="1330.7" y1="676.2" x2="1326.8" y2="765.0" stroke="#a09898" stroke-width="1.6" stroke-opacity="0.70"/>
<line x1="1138.2" y1="771.9" x2="1153.5" y2="851.2" stroke="#7c0a0a" stroke-width="2.2" stroke-opacity="0.70"/>
<line x1="1309.2" y1="716.7" x2="1307.4" y2="801.5" stroke="#7c0a0a" stroke-width="1.6" stroke-opacity="1.00"/>
<line x1="1197.4" y1="774.7" x2="1206.8" y2="853.7" stroke="#b41410" stroke-width="3.0" stroke-opacity="0.85"/>
<line x1="1051.0" y1="696.7" x2="1075.1" y2="783.4" stroke="#5e0606" stroke-width="3.0" stroke-opacity="0.55"/>
<line x1="1234.7" y1="766.3" x2="1240.4" y2="846.1" stroke="#5e0606" stroke-width="2.2" stroke-opacity="1.00"/>
<line x1="1260.5" y1="755.4" x2="1263.6" y2="836.3" stroke="#b4acac" stroke-width="3.2" stroke-opacity="1.00"/>
<line x1="1333.5" y1="642.5" x2="1329.2" y2="734.7" stroke="#b4acac" stroke-width="1.6" stroke-opacity="1.00"/>
<line x1="1329.4" y1="680.5" x2="1325.6" y2="768.9" stroke="#a81010" stroke-width="4.0" stroke-opacity="0.55"/>
<line x1="1333.8" y1="657.7" x2="1329.6" y2="748.4" stroke="#6e0808" stroke-width="1.6" stroke-opacity="0.55"/>
<line x1="1051.4" y1="698.2" x2="1075.4" y2="784.8" stroke="#b41410" stroke-width="0.8" stroke-opacity="0.55"/>
<line x1="1063.0" y1="723.9" x2="1085.8" y2="808.0" stroke="#b41410" stroke-width="2.2" stroke-opacity="0.70"/>
<line x1="1149.3" y1="774.0" x2="1163.5" y2="853.1" stroke="#6e0808" stroke-width="3.0" stroke-opacity="0.85"/>
<line x1="1226.5" y1="768.8" x2="1233.0" y2="848.4" stroke="#8e0e0e" stroke-width="2.2" stroke-opacity="1.00"/>
<line x1="1223.6" y1="769.7" x2="1230.3" y2="849.1" stroke="#a81010" stroke-width="0.8" stroke-opacity="0.70"/>
<line x1="1333.8" y1="657.6" x2="1329.6" y2="748.3" stroke="#a81010" stroke-width="2.4" stroke-opacity="1.00"/>
<line x1="1074.1" y1="737.8" x2="1095.9" y2="820.5" stroke="#c81812" stroke-width="3.0" stroke-opacity="0.55"/>
<line x1="1322.6" y1="696.4" x2="1319.5" y2="783.3" stroke="#8a1414" stroke-width="2.4" stroke-opacity="0.70"/>
<line x1="1124.3" y1="768.1" x2="1141.0" y2="847.7" stroke="#7c0a0a" stroke-width="3.0" stroke-opacity="0.85"/>
<line x1="1049.3" y1="687.3" x2="1073.5" y2="775.0" stroke="#8e0e0e" stroke-width="1.6" stroke-opacity="0.85"/>
<line x1="1056.6" y1="712.6" x2="1080.1" y2="797.8" stroke="#6e0808" stroke-width="1.2" stroke-opacity="0.85"/>
<line x1="1148.4" y1="773.9" x2="1162.7" y2="852.9" stroke="#b41410" stroke-width="1.2" stroke-opacity="0.70"/>
<line x1="1077.1" y1="740.8" x2="1098.6" y2="823.2" stroke="#e02c1c" stroke-width="1.2" stroke-opacity="1.00"/>
<line x1="1278.2" y1="744.9" x2="1279.5" y2="826.8" stroke="#7c0a0a" stroke-width="1.0" stroke-opacity="0.85"/>
<line x1="1227.4" y1="768.6" x2="1233.8" y2="848.2" stroke="#e02c1c" stroke-width="3.0" stroke-opacity="0.85"/>
<line x1="1239.1" y1="764.8" x2="1244.3" y2="844.8" stroke="#a81010" stroke-width="2.4" stroke-opacity="0.55"/>
<line x1="1319.6" y1="702.0" x2="1316.7" y2="788.2" stroke="#c41812" stroke-width="3.2" stroke-opacity="0.70"/>
<line x1="1285.0" y1="740.0" x2="1285.6" y2="822.5" stroke="#8e0e0e" stroke-width="4.0" stroke-opacity="0.55"/>
<line x1="1224.0" y1="769.5" x2="1230.7" y2="849.0" stroke="#6e0808" stroke-width="0.8" stroke-opacity="0.55"/>
<line x1="1056.4" y1="712.1" x2="1079.9" y2="797.3" stroke="#e02c1c" stroke-width="2.2" stroke-opacity="0.70"/>
<line x1="1245.2" y1="762.5" x2="1249.8" y2="842.7" stroke="#7a7272" stroke-width="2.4" stroke-opacity="0.55"/>
<line x1="1082.5" y1="745.5" x2="1103.4" y2="827.4" stroke="#c0a09c" stroke-width="2.2" stroke-opacity="1.00"/>
<line x1="1102.6" y1="758.9" x2="1121.5" y2="839.5" stroke="#8e0e0e" stroke-width="1.2" stroke-opacity="0.70"/>
<line x1="1048.8" y1="681.8" x2="1073.1" y2="770.1" stroke="#7c0a0a" stroke-width="1.2" stroke-opacity="1.00"/>
<line x1="1080.7" y1="744.0" x2="1101.8" y2="826.1" stroke="#c81812" stroke-width="3.0" stroke-opacity="1.00"/>
<line x1="1138.8" y1="772.1" x2="1154.1" y2="851.3" stroke="#6e0808" stroke-width="1.2" stroke-opacity="0.70"/>
<line x1="1330.3" y1="627.5" x2="1326.4" y2="721.2" stroke="#7a7272" stroke-width="1.0" stroke-opacity="0.70"/>
<line x1="1245.2" y1="762.4" x2="1249.8" y2="842.7" stroke="#c41812" stroke-width="1.6" stroke-opacity="0.55"/>
<line x1="1312.1" y1="713.0" x2="1310.0" y2="798.2" stroke="#8c8080" stroke-width="4.0" stroke-opacity="0.70"/>
<line x1="1095.0" y1="754.6" x2="1114.7" y2="835.6" stroke="#6e0808" stroke-width="1.6" stroke-opacity="1.00"/>
<line x1="1072.7" y1="736.3" x2="1094.5" y2="819.1" stroke="#7c0a0a" stroke-width="1.6" stroke-opacity="1.00"/>
<line x1="1136.4" y1="771.5" x2="1151.9" y2="850.8" stroke="#5e0606" stroke-width="2.2" stroke-opacity="0.70"/>
<line x1="1198.7" y1="774.5" x2="1208.0" y2="853.5" stroke="#5e0606" stroke-width="3.0" stroke-opacity="0.55"/>
<line x1="1063.3" y1="724.4" x2="1086.1" y2="808.4" stroke="#c81812" stroke-width="3.0" stroke-opacity="0.55"/>
<line x1="1090.7" y1="751.7" x2="1110.7" y2="833.0" stroke="#c81812" stroke-width="1.2" stroke-opacity="0.70"/>
<line x1="1226.8" y1="768.8" x2="1233.3" y2="848.3" stroke="#8e0e0e" stroke-width="3.0" stroke-opacity="0.55"/>
<line x1="1289.2" y1="736.6" x2="1289.4" y2="819.4" stroke="#8a1414" stroke-width="4.0" stroke-opacity="1.00"/>
<line x1="1087.9" y1="749.7" x2="1108.2" y2="831.2" stroke="#8e0e0e" stroke-width="3.0" stroke-opacity="0.55"/>
<line x1="1313.0" y1="711.9" x2="1310.8" y2="797.1" stroke="#8c8080" stroke-width="1.0" stroke-opacity="0.55"/>
<line x1="1210.5" y1="772.7" x2="1218.5" y2="851.8" stroke="#5e0606" stroke-width="0.8" stroke-opacity="0.55"/>
<line x1="1240.9" y1="764.1" x2="1246.0" y2="844.2" stroke="#6e0808" stroke-width="4.0" stroke-opacity="0.70"/>
<line x1="1123.1" y1="767.7" x2="1140.0" y2="847.4" stroke="#7c0a0a" stroke-width="3.0" stroke-opacity="1.00"/>
<line x1="1210.4" y1="772.7" x2="1218.5" y2="851.8" stroke="#e02c1c" stroke-width="3.0" stroke-opacity="0.85"/>
<line x1="1054.5" y1="707.5" x2="1078.2" y2="793.2" stroke="#e02c1c" stroke-width="2.2" stroke-opacity="0.70"/>
<line x1="1252.9" y1="759.1" x2="1256.7" y2="839.7" stroke="#c6c0c0" stroke-width="3.2" stroke-opacity="0.85"/>
<line x1="1333.8" y1="646.4" x2="1329.6" y2="738.2" stroke="#c41812" stroke-width="3.2" stroke-opacity="0.55"/>
<line x1="1321.2" y1="699.2" x2="1318.2" y2="785.7" stroke="#8c8080" stroke-width="1.0" stroke-opacity="0.70"/>
<line x1="1052.4" y1="701.6" x2="1076.3" y2="787.9" stroke="#6e0808" stroke-width="1.2" stroke-opacity="0.85"/>
<line x1="1061.2" y1="721.2" x2="1084.2" y2="805.5" stroke="#7c0a0a" stroke-width="1.2" stroke-opacity="0.55"/>
<line x1="1260.8" y1="755.3" x2="1263.9" y2="836.2" stroke="#8e0e0e" stroke-width="1.6" stroke-opacity="0.70"/>
<line x1="1329.5" y1="680.2" x2="1325.7" y2="768.6" stroke="#c6c0c0" stroke-width="4.0" stroke-opacity="1.00"/>
<line x1="1284.5" y1="740.4" x2="1285.1" y2="822.8" stroke="#c41812" stroke-width="2.4" stroke-opacity="0.85"/>
<line x1="1334.0" y1="653.8" x2="1329.7" y2="744.9" stroke="#a81010" stroke-width="1.0" stroke-opacity="0.85"/>
<line x1="1187.9" y1="775.6" x2="1198.2" y2="854.5" stroke="#7c0a0a" stroke-width="0.8" stroke-opacity="1.00"/>
<line x1="1287.2" y1="738.2" x2="1287.6" y2="820.9" stroke="#6e0808" stroke-width="2.4" stroke-opacity="0.55"/>
<line x1="1333.5" y1="661.7" x2="1329.3" y2="752.0" stroke="#c41812" stroke-width="1.0" stroke-opacity="0.55"/>
<line x1="1308.4" y1="717.7" x2="1306.7" y2="802.4" stroke="#7c0a0a" stroke-width="1.6" stroke-opacity="0.85"/>
<line x1="1097.9" y1="756.3" x2="1117.3" y2="837.1" stroke="#c0a09c" stroke-width="1.6" stroke-opacity="1.00"/>
<line x1="1330.8" y1="675.6" x2="1326.9" y2="764.5" stroke="#8a1414" stroke-width="4.0" stroke-opacity="1.00"/>
<line x1="1119.9" y1="766.6" x2="1137.0" y2="846.4" stroke="#8e0e0e" stroke-width="1.6" stroke-opacity="0.55"/>
<line x1="1082.9" y1="745.8" x2="1103.7" y2="827.7" stroke="#c81812" stroke-width="2.2" stroke-opacity="0.55"/>
<line x1="1307.5" y1="718.8" x2="1305.9" y2="803.4" stroke="#7c0a0a" stroke-width="1.0" stroke-opacity="0.85"/>
<line x1="1334.0" y1="650.6" x2="1329.7" y2="742.0" stroke="#c41812" stroke-width="1.0" stroke-opacity="0.85"/>
<line x1="1065.5" y1="727.6" x2="1088.1" y2="811.3" stroke="#7c0a0a" stroke-width="0.8" stroke-opacity="0.85"/>
<line x1="1048.8" y1="681.3" x2="1073.1" y2="769.7" stroke="#c0a09c" stroke-width="1.6" stroke-opacity="0.70"/>
<line x1="1332.3" y1="635.4" x2="1328.2" y2="728.4" stroke="#c41812" stroke-width="1.0" stroke-opacity="0.70"/>
<line x1="1309.4" y1="716.4" x2="1307.6" y2="801.2" stroke="#a09898" stroke-width="1.6" stroke-opacity="0.85"/>
<line x1="1152.0" y1="774.4" x2="1165.9" y2="853.4" stroke="#5e0606" stroke-width="1.2" stroke-opacity="0.85"/>
<line x1="1239.8" y1="764.5" x2="1245.0" y2="844.5" stroke="#7a7272" stroke-width="1.6" stroke-opacity="0.85"/>
<line x1="1281.5" y1="742.6" x2="1282.5" y2="824.8" stroke="#7c0a0a" stroke-width="2.4" stroke-opacity="0.55"/>
<line x1="1329.6" y1="625.3" x2="1325.8" y2="719.3" stroke="#8a1414" stroke-width="4.0" stroke-opacity="0.70"/>
<line x1="1207.3" y1="773.2" x2="1215.7" y2="852.4" stroke="#e02c1c" stroke-width="2.2" stroke-opacity="0.55"/>
<line x1="1138.3" y1="772.0" x2="1153.6" y2="851.2" stroke="#c0a09c" stroke-width="2.2" stroke-opacity="1.00"/>
<line x1="1049.8" y1="690.3" x2="1073.9" y2="777.7" stroke="#a81010" stroke-width="1.2" stroke-opacity="0.70"/>
<line x1="1283.1" y1="741.4" x2="1283.9" y2="823.7" stroke="#7a7272" stroke-width="1.6" stroke-opacity="1.00"/>
<line x1="1048.9" y1="683.2" x2="1073.2" y2="771.3" stroke="#7c0a0a" stroke-width="1.2" stroke-opacity="0.55"/>
<line x1="1333.8" y1="645.7" x2="1329.5" y2="737.6" stroke="#8c8080" stroke-width="3.2" stroke-opacity="0.70"/>
<line x1="1333.1" y1="640.0" x2="1328.9" y2="732.4" stroke="#7a7272" stroke-width="3.2" stroke-opacity="0.85"/>
<line x1="1166.2" y1="775.8" x2="1178.7" y2="854.6" stroke="#a81010" stroke-width="0.8" stroke-opacity="1.00"/>
<line x1="1326.1" y1="689.1" x2="1322.7" y2="776.7" stroke="#8c8080" stroke-width="3.2" stroke-opacity="0.55"/>
<line x1="1309.1" y1="716.9" x2="1307.3" y2="801.6" stroke="#a81010" stroke-width="4.0" stroke-opacity="0.85"/>
<line x1="1314.0" y1="710.5" x2="1311.7" y2="795.9" stroke="#8c8080" stroke-width="1.6" stroke-opacity="0.85"/>
<line x1="1326.5" y1="688.2" x2="1323.0" y2="775.9" stroke="#a81010" stroke-width="3.2" stroke-opacity="0.55"/>
<line x1="1226.3" y1="768.9" x2="1232.8" y2="848.5" stroke="#5e0606" stroke-width="1.2" stroke-opacity="0.70"/>
<line x1="1211.9" y1="772.4" x2="1219.8" y2="851.6" stroke="#7c0a0a" stroke-width="0.8" stroke-opacity="0.85"/>
<line x1="1077.5" y1="741.2" x2="1098.9" y2="823.5" stroke="#c81812" stroke-width="2.2" stroke-opacity="0.55"/>
<line x1="1262.7" y1="754.3" x2="1265.5" y2="835.3" stroke="#8c8080" stroke-width="2.4" stroke-opacity="0.70"/>
<line x1="1334.0" y1="650.9" x2="1329.7" y2="742.2" stroke="#8a1414" stroke-width="1.6" stroke-opacity="1.00"/>
<line x1="1094.8" y1="754.4" x2="1114.5" y2="835.4" stroke="#7c0a0a" stroke-width="1.2" stroke-opacity="0.85"/>
<line x1="1110.1" y1="762.6" x2="1128.2" y2="842.8" stroke="#c81812" stroke-width="0.8" stroke-opacity="1.00"/>
<line x1="1106.2" y1="760.8" x2="1124.8" y2="841.2" stroke="#5e0606" stroke-width="1.2" stroke-opacity="0.55"/>
<line x1="1074.8" y1="738.5" x2="1096.5" y2="821.1" stroke="#b41410" stroke-width="1.2" stroke-opacity="0.55"/>
<line x1="1331.3" y1="631.0" x2="1327.3" y2="724.4" stroke="#a09898" stroke-width="2.4" stroke-opacity="0.55"/>
<line x1="1269.9" y1="750.2" x2="1272.0" y2="831.6" stroke="#8e0e0e" stroke-width="4.0" stroke-opacity="0.55"/>
<line x1="1152.4" y1="774.5" x2="1166.3" y2="853.5" stroke="#5e0606" stroke-width="1.2" stroke-opacity="1.00"/>
<line x1="1308.9" y1="717.1" x2="1307.2" y2="801.8" stroke="#8e0e0e" stroke-width="1.0" stroke-opacity="0.55"/>
<line x1="1137.9" y1="771.9" x2="1153.2" y2="851.1" stroke="#8e0e0e" stroke-width="2.2" stroke-opacity="0.85"/>
<line x1="1079.9" y1="743.3" x2="1101.0" y2="825.4" stroke="#a81010" stroke-width="1.2" stroke-opacity="0.70"/>
<line x1="1317.3" y1="705.6" x2="1314.7" y2="791.5" stroke="#7a7272" stroke-width="3.2" stroke-opacity="1.00"/>
<line x1="1069.7" y1="732.9" x2="1091.9" y2="816.1" stroke="#8e0e0e" stroke-width="2.2" stroke-opacity="0.85"/>
<line x1="1093.9" y1="753.8" x2="1113.6" y2="834.9" stroke="#b41410" stroke-width="1.2" stroke-opacity="0.55"/>
<line x1="1165.8" y1="775.7" x2="1178.3" y2="854.6" stroke="#6e0808" stroke-width="1.6" stroke-opacity="0.85"/>
<line x1="1155.5" y1="774.9" x2="1169.1" y2="853.8" stroke="#c81812" stroke-width="0.8" stroke-opacity="1.00"/>
<line x1="1333.4" y1="641.9" x2="1329.2" y2="734.2" stroke="#8c8080" stroke-width="1.0" stroke-opacity="0.70"/>
<line x1="1130.5" y1="770.0" x2="1146.6" y2="849.5" stroke="#a81010" stroke-width="3.0" stroke-opacity="0.85"/>
<line x1="1231.0" y1="767.5" x2="1237.0" y2="847.2" stroke="#7c0a0a" stroke-width="0.8" stroke-opacity="0.70"/>
<line x1="1294.2" y1="732.4" x2="1293.9" y2="815.6" stroke="#b4acac" stroke-width="3.2" stroke-opacity="0.55"/>
<line x1="1301.3" y1="725.5" x2="1300.3" y2="809.4" stroke="#b4acac" stroke-width="4.0" stroke-opacity="1.00"/>
<line x1="1048.8" y1="681.5" x2="1073.1" y2="769.8" stroke="#c0a09c" stroke-width="1.2" stroke-opacity="0.70"/>
<line x1="1333.9" y1="647.2" x2="1329.6" y2="738.9" stroke="#b4acac" stroke-width="1.6" stroke-opacity="0.85"/>
<polygon points="1309.3,592.0 1313.6,596.8 1317.5,601.9 1321.0,607.1 1324.1,612.5 1326.8,618.1 1329.1,623.8 1331.0,629.7 1332.4,635.6 1333.4,641.7 1333.9,647.8 1334.0,653.9 1333.6,660.1 1332.8,666.4 1331.6,672.6 1329.9,678.8 1327.8,684.9 1325.3,691.0 1322.4,697.0 1319.0,702.9 1315.3,708.6 1311.2,714.3 1306.7,719.8 1301.8,725.1 1296.6,730.2 1291.1,735.1 1285.2,739.8 1279.1,744.3 1272.7,748.5 1266.0,752.4 1259.1,756.1 1252.0,759.5 1244.8,762.6 1237.3,765.4 1229.7,767.9 1222.0,770.1 1214.2,771.9 1206.3,773.4 1198.4,774.6 1190.4,775.4 1182.5,775.9 1174.6,776.0 1166.7,775.8 1158.9,775.2 1151.2,774.3 1143.6,773.1 1136.2,771.5 1129.0,769.6 1121.9,767.3 1115.1,764.8 1108.5,761.9 1102.1,758.7 1096.1,755.2 1090.3,751.5 1084.9,747.5 1079.7,743.2 1075.0,738.6 1070.5,733.9 1066.5,728.9 1062.9,723.7 1059.6,718.4 1056.8,712.9 1054.3,707.2 1052.3,701.4 1050.8,695.5 1049.6,689.5 1048.9,683.4 1048.7,677.2 1048.9,671.0 1049.5,664.8 1050.6,658.6 1052.1,652.4 1054.1,646.2 1077.8,738.1 1076.1,743.6 1074.7,749.2 1073.7,754.8 1073.1,760.4 1073.0,765.9 1073.2,771.5 1073.8,777.0 1074.8,782.4 1076.2,787.7 1078.0,792.9 1080.2,798.0 1082.8,803.0 1085.7,807.8 1089.0,812.5 1092.6,817.0 1096.6,821.2 1100.9,825.3 1105.5,829.2 1110.4,832.8 1115.6,836.2 1121.1,839.3 1126.8,842.1 1132.7,844.7 1138.9,847.0 1145.2,849.1 1151.7,850.8 1158.4,852.2 1165.2,853.3 1172.1,854.1 1179.2,854.7 1186.2,854.8 1193.4,854.7 1200.5,854.3 1207.7,853.6 1214.8,852.5 1221.9,851.2 1228.9,849.5 1235.9,847.6 1242.7,845.3 1249.4,842.8 1256.0,840.0 1262.4,837.0 1268.6,833.6 1274.6,830.1 1280.3,826.3 1285.8,822.3 1291.1,818.0 1296.1,813.6 1300.8,809.0 1305.1,804.2 1309.2,799.3 1312.9,794.2 1316.3,789.0 1319.3,783.7 1321.9,778.3 1324.2,772.9 1326.1,767.3 1327.6,761.8 1328.7,756.2 1329.4,750.6 1329.7,745.0 1329.6,739.4 1329.2,733.9 1328.3,728.5 1327.0,723.1 1325.3,717.9 1323.3,712.7 1320.9,707.7 1318.1,702.8 1314.9,698.1 1311.4,693.6 1307.5,689.2" fill="url(#wallsh)"/>
<ellipse cx="1201.3" cy="754.5" rx="129.6" ry="98.8" transform="rotate(-12.0 1201.3 754.5)" fill="url(#wallsh)"/>
</g>
<g clip-path="url(#rimc)">
<ellipse cx="1191.3" cy="664.5" rx="144.0" ry="109.8" transform="rotate(-12.0 1191.3 664.5)" fill="#b00e0a"/>
<ellipse cx="1191.5" cy="665.4" rx="142.7" ry="109.0" transform="rotate(-12.0 1191.5 665.4)" fill="#be110a"/>
<ellipse cx="1191.7" cy="666.3" rx="141.5" ry="108.1" transform="rotate(-12.0 1191.7 666.3)" fill="#cd140b"/>
<ellipse cx="1191.8" cy="667.2" rx="140.3" ry="107.3" transform="rotate(-12.0 1191.8 667.2)" fill="#db180b"/>
<ellipse cx="1192.0" cy="668.1" rx="139.0" ry="106.4" transform="rotate(-12.0 1192.0 668.1)" fill="#e91b0c"/>
<ellipse cx="1192.1" cy="668.9" rx="137.8" ry="105.6" transform="rotate(-12.0 1192.1 668.9)" fill="#f0240c"/>
<ellipse cx="1192.3" cy="669.8" rx="136.6" ry="104.8" transform="rotate(-12.0 1192.3 669.8)" fill="#f4310c"/>
<ellipse cx="1192.4" cy="670.7" rx="135.4" ry="103.9" transform="rotate(-12.0 1192.4 670.7)" fill="#f73d0c"/>
<ellipse cx="1192.6" cy="671.6" rx="134.1" ry="103.1" transform="rotate(-12.0 1192.6 671.6)" fill="#fa490c"/>
<ellipse cx="1192.8" cy="672.5" rx="132.9" ry="102.2" transform="rotate(-12.0 1192.8 672.5)" fill="#fe560c"/>
<ellipse cx="1192.9" cy="673.4" rx="131.7" ry="101.4" transform="rotate(-12.0 1192.9 673.4)" fill="#fe640c"/>
<ellipse cx="1193.1" cy="674.3" rx="130.5" ry="100.6" transform="rotate(-12.0 1193.1 674.3)" fill="#fd730c"/>
<ellipse cx="1193.2" cy="675.2" rx="129.2" ry="99.7" transform="rotate(-12.0 1193.2 675.2)" fill="#fb820c"/>
<ellipse cx="1193.4" cy="676.1" rx="128.0" ry="98.9" transform="rotate(-12.0 1193.4 676.1)" fill="#fa910c"/>
<ellipse cx="1193.5" cy="676.9" rx="126.8" ry="98.0" transform="rotate(-12.0 1193.5 676.9)" fill="#f9a00c"/>
<ellipse cx="1193.7" cy="677.8" rx="125.6" ry="97.2" transform="rotate(-12.0 1193.7 677.8)" fill="#f6ae0c"/>
<ellipse cx="1193.9" cy="678.7" rx="124.3" ry="96.3" transform="rotate(-12.0 1193.9 678.7)" fill="#f1ba0c"/>
<ellipse cx="1194.0" cy="679.6" rx="123.1" ry="95.5" transform="rotate(-12.0 1194.0 679.6)" fill="#edc60c"/>
<ellipse cx="1194.2" cy="680.5" rx="121.9" ry="94.7" transform="rotate(-12.0 1194.2 680.5)" fill="#e9d30c"/>
<ellipse cx="1194.3" cy="681.4" rx="120.6" ry="93.8" transform="rotate(-12.0 1194.3 681.4)" fill="#dfdb0c"/>
<ellipse cx="1194.5" cy="682.3" rx="119.4" ry="93.0" transform="rotate(-12.0 1194.5 682.3)" fill="#c4d90c"/>
<ellipse cx="1194.6" cy="683.2" rx="118.2" ry="92.1" transform="rotate(-12.0 1194.6 683.2)" fill="#a9d70c"/>
<ellipse cx="1194.8" cy="684.1" rx="117.0" ry="91.3" transform="rotate(-12.0 1194.8 684.1)" fill="#8ed50c"/>
<ellipse cx="1195.0" cy="684.9" rx="115.7" ry="90.5" transform="rotate(-12.0 1195.0 684.9)" fill="#74d30d"/>
<ellipse cx="1195.1" cy="685.8" rx="114.5" ry="89.6" transform="rotate(-12.0 1195.1 685.8)" fill="#5ccf11"/>
<ellipse cx="1195.3" cy="686.7" rx="113.3" ry="88.8" transform="rotate(-12.0 1195.3 686.7)" fill="#44cb15"/>
<ellipse cx="1195.4" cy="687.6" rx="112.1" ry="87.9" transform="rotate(-12.0 1195.4 687.6)" fill="#2cc719"/>
<ellipse cx="1195.6" cy="688.5" rx="110.8" ry="87.1" transform="rotate(-12.0 1195.6 688.5)" fill="#1bc422"/>
<ellipse cx="1195.7" cy="689.4" rx="109.6" ry="86.2" transform="rotate(-12.0 1195.7 689.4)" fill="#19c333"/>
<ellipse cx="1195.9" cy="690.3" rx="108.4" ry="85.4" transform="rotate(-12.0 1195.9 690.3)" fill="#16c243"/>
<ellipse cx="1196.1" cy="691.2" rx="107.2" ry="84.6" transform="rotate(-12.0 1196.1 691.2)" fill="#14c154"/>
<ellipse cx="1196.2" cy="692.1" rx="105.9" ry="83.7" transform="rotate(-12.0 1196.2 692.1)" fill="#12c165"/>
<ellipse cx="1196.4" cy="692.9" rx="104.7" ry="82.9" transform="rotate(-12.0 1196.4 692.9)" fill="#10c075"/>
<ellipse cx="1196.5" cy="693.8" rx="103.5" ry="82.0" transform="rotate(-12.0 1196.5 693.8)" fill="#11c185"/>
<ellipse cx="1196.7" cy="694.7" rx="102.2" ry="81.2" transform="rotate(-12.0 1196.7 694.7)" fill="#12c295"/>
<ellipse cx="1196.8" cy="695.6" rx="101.0" ry="80.4" transform="rotate(-12.0 1196.8 695.6)" fill="#13c3a4"/>
<ellipse cx="1197.0" cy="696.5" rx="99.8" ry="79.5" transform="rotate(-12.0 1197.0 696.5)" fill="#14c4b4"/>
<ellipse cx="1197.1" cy="698.2" rx="98.2" ry="77.7" transform="rotate(-12.0 1197.1 698.2)" fill="url(#gapg)"/>
<ellipse cx="1197.2" cy="700.0" rx="96.7" ry="75.9" transform="rotate(-12.0 1197.2 700.0)" fill="url(#gapg)"/>
<ellipse cx="1197.4" cy="701.7" rx="95.1" ry="74.1" transform="rotate(-12.0 1197.4 701.7)" fill="url(#gapg)"/>
<ellipse cx="1197.5" cy="703.4" rx="93.5" ry="72.3" transform="rotate(-12.0 1197.5 703.4)" fill="url(#gapg)"/>
<ellipse cx="1197.6" cy="705.1" rx="91.9" ry="70.5" transform="rotate(-12.0 1197.6 705.1)" fill="url(#gapg)"/>
<ellipse cx="1197.7" cy="706.9" rx="90.4" ry="68.7" transform="rotate(-12.0 1197.7 706.9)" fill="url(#gapg)"/>
<ellipse cx="1197.8" cy="708.6" rx="88.8" ry="66.9" transform="rotate(-12.0 1197.8 708.6)" fill="url(#gapg)"/>
<ellipse cx="1198.0" cy="710.3" rx="87.2" ry="65.1" transform="rotate(-12.0 1198.0 710.3)" fill="url(#gapg)"/>
<g clip-path="url(#oinc)">
<line x1="1286.7" y1="612" x2="1287.4" y2="780" stroke="#8fc4be" stroke-width="1.4" stroke-opacity="0.50"/>
<line x1="1154.8" y1="612" x2="1156.0" y2="780" stroke="#cfe3e0" stroke-width="0.7" stroke-opacity="0.35"/>
<line x1="1276.0" y1="612" x2="1275.3" y2="780" stroke="#b9d0cd" stroke-width="0.7" stroke-opacity="0.25"/>
<line x1="1286.2" y1="612" x2="1285.9" y2="780" stroke="#1d8d80" stroke-width="1.0" stroke-opacity="0.50"/>
<line x1="1127.6" y1="612" x2="1126.8" y2="780" stroke="#187a70" stroke-width="0.7" stroke-opacity="0.35"/>
<line x1="1100.3" y1="612" x2="1102.4" y2="780" stroke="#187a70" stroke-width="0.7" stroke-opacity="0.25"/>
<line x1="1239.8" y1="612" x2="1238.5" y2="780" stroke="#1d8d80" stroke-width="1.0" stroke-opacity="0.25"/>
<line x1="1177.0" y1="612" x2="1174.5" y2="780" stroke="#0f8f7c" stroke-width="1.0" stroke-opacity="0.35"/>
<line x1="1267.4" y1="612" x2="1265.0" y2="780" stroke="#187a70" stroke-width="1.4" stroke-opacity="0.35"/>
<line x1="1224.5" y1="612" x2="1222.9" y2="780" stroke="#8fc4be" stroke-width="1.0" stroke-opacity="0.35"/>
<line x1="1200.1" y1="612" x2="1201.8" y2="780" stroke="#8fc4be" stroke-width="1.0" stroke-opacity="0.25"/>
<line x1="1259.1" y1="612" x2="1258.5" y2="780" stroke="#1d8d80" stroke-width="1.4" stroke-opacity="0.50"/>
<line x1="1139.9" y1="612" x2="1137.2" y2="780" stroke="#cfe3e0" stroke-width="1.4" stroke-opacity="0.35"/>
<line x1="1188.4" y1="612" x2="1189.2" y2="780" stroke="#8fc4be" stroke-width="1.0" stroke-opacity="0.35"/>
<line x1="1109.6" y1="612" x2="1107.4" y2="780" stroke="#0f8f7c" stroke-width="1.0" stroke-opacity="0.35"/>
<line x1="1167.4" y1="612" x2="1165.9" y2="780" stroke="#187a70" stroke-width="1.4" stroke-opacity="0.50"/>
<line x1="1151.0" y1="612" x2="1149.4" y2="780" stroke="#1d8d80" stroke-width="1.0" stroke-opacity="0.50"/>
<line x1="1231.1" y1="612" x2="1229.1" y2="780" stroke="#cfe3e0" stroke-width="0.7" stroke-opacity="0.25"/>
<line x1="1140.7" y1="612" x2="1141.0" y2="780" stroke="#b9d0cd" stroke-width="1.0" stroke-opacity="0.35"/>
<line x1="1295.3" y1="612" x2="1294.9" y2="780" stroke="#b9d0cd" stroke-width="1.4" stroke-opacity="0.25"/>
<line x1="1147.8" y1="612" x2="1146.9" y2="780" stroke="#8fc4be" stroke-width="0.7" stroke-opacity="0.35"/>
<line x1="1146.9" y1="612" x2="1148.7" y2="780" stroke="#187a70" stroke-width="0.7" stroke-opacity="0.25"/>
<line x1="1246.9" y1="612" x2="1246.2" y2="780" stroke="#b9d0cd" stroke-width="1.4" stroke-opacity="0.50"/>
<line x1="1141.2" y1="612" x2="1140.2" y2="780" stroke="#187a70" stroke-width="0.7" stroke-opacity="0.35"/>
<line x1="1154.4" y1="612" x2="1152.1" y2="780" stroke="#187a70" stroke-width="1.4" stroke-opacity="0.50"/>
<line x1="1223.4" y1="612" x2="1221.0" y2="780" stroke="#8fc4be" stroke-width="0.7" stroke-opacity="0.35"/>
<line x1="1178.4" y1="612" x2="1177.9" y2="780" stroke="#b9d0cd" stroke-width="1.0" stroke-opacity="0.25"/>
<line x1="1124.9" y1="612" x2="1126.2" y2="780" stroke="#b9d0cd" stroke-width="1.0" stroke-opacity="0.50"/>
<line x1="1196.0" y1="612" x2="1195.4" y2="780" stroke="#cfe3e0" stroke-width="1.4" stroke-opacity="0.35"/>
<line x1="1290.6" y1="612" x2="1292.3" y2="780" stroke="#8fc4be" stroke-width="0.7" stroke-opacity="0.25"/>
<line x1="1129.8" y1="612" x2="1127.5" y2="780" stroke="#1d8d80" stroke-width="1.4" stroke-opacity="0.50"/>
<line x1="1226.9" y1="612" x2="1224.4" y2="780" stroke="#b9d0cd" stroke-width="0.7" stroke-opacity="0.25"/>
<line x1="1253.3" y1="612" x2="1253.7" y2="780" stroke="#8fc4be" stroke-width="0.7" stroke-opacity="0.50"/>
<line x1="1240.1" y1="612" x2="1240.9" y2="780" stroke="#8fc4be" stroke-width="1.4" stroke-opacity="0.50"/>
<line x1="1185.7" y1="612" x2="1183.3" y2="780" stroke="#cfe3e0" stroke-width="1.0" stroke-opacity="0.50"/>
<line x1="1284.9" y1="612" x2="1284.3" y2="780" stroke="#8fc4be" stroke-width="0.7" stroke-opacity="0.50"/>
<line x1="1100.2" y1="612" x2="1099.0" y2="780" stroke="#0f8f7c" stroke-width="1.0" stroke-opacity="0.35"/>
<line x1="1288.0" y1="612" x2="1290.0" y2="780" stroke="#1d8d80" stroke-width="0.7" stroke-opacity="0.35"/>
<line x1="1203.2" y1="612" x2="1201.6" y2="780" stroke="#0f8f7c" stroke-width="1.0" stroke-opacity="0.50"/>
<line x1="1227.3" y1="612" x2="1224.5" y2="780" stroke="#cfe3e0" stroke-width="1.0" stroke-opacity="0.50"/>
<line x1="1226.8" y1="612" x2="1225.4" y2="780" stroke="#cfe3e0" stroke-width="1.4" stroke-opacity="0.35"/>
<line x1="1281.3" y1="612" x2="1281.3" y2="780" stroke="#8fc4be" stroke-width="1.4" stroke-opacity="0.35"/>
<line x1="1240.8" y1="612" x2="1241.9" y2="780" stroke="#187a70" stroke-width="0.7" stroke-opacity="0.25"/>
<line x1="1256.2" y1="612" x2="1258.3" y2="780" stroke="#1d8d80" stroke-width="0.7" stroke-opacity="0.25"/>
<line x1="1197.2" y1="612" x2="1196.0" y2="780" stroke="#8fc4be" stroke-width="0.7" stroke-opacity="0.25"/>
<line x1="1191.2" y1="612" x2="1192.7" y2="780" stroke="#187a70" stroke-width="1.0" stroke-opacity="0.25"/>
<line x1="1286.6" y1="612" x2="1287.2" y2="780" stroke="#b9d0cd" stroke-width="0.7" stroke-opacity="0.35"/>
<line x1="1181.7" y1="612" x2="1179.1" y2="780" stroke="#1d8d80" stroke-width="1.4" stroke-opacity="0.25"/>
<line x1="1280.7" y1="612" x2="1279.0" y2="780" stroke="#cfe3e0" stroke-width="1.4" stroke-opacity="0.25"/>
<line x1="1181.4" y1="612" x2="1178.8" y2="780" stroke="#1d8d80" stroke-width="1.0" stroke-opacity="0.35"/>
<line x1="1276.0" y1="612" x2="1277.4" y2="780" stroke="#187a70" stroke-width="0.7" stroke-opacity="0.25"/>
<line x1="1164.5" y1="612" x2="1165.4" y2="780" stroke="#8fc4be" stroke-width="1.4" stroke-opacity="0.50"/>
<line x1="1191.7" y1="612" x2="1192.6" y2="780" stroke="#187a70" stroke-width="1.0" stroke-opacity="0.35"/>
<line x1="1293.1" y1="612" x2="1291.1" y2="780" stroke="#b9d0cd" stroke-width="0.7" stroke-opacity="0.25"/>
<line x1="1154.8" y1="612" x2="1154.4" y2="780" stroke="#187a70" stroke-width="0.7" stroke-opacity="0.50"/>
<line x1="1289.0" y1="612" x2="1288.3" y2="780" stroke="#8fc4be" stroke-width="1.0" stroke-opacity="0.35"/>
<line x1="1117.2" y1="612" x2="1117.0" y2="780" stroke="#1d8d80" stroke-width="1.0" stroke-opacity="0.50"/>
<line x1="1280.2" y1="612" x2="1279.2" y2="780" stroke="#8fc4be" stroke-width="1.4" stroke-opacity="0.35"/>
<line x1="1105.9" y1="612" x2="1104.4" y2="780" stroke="#b9d0cd" stroke-width="1.4" stroke-opacity="0.35"/>
<line x1="1108.0" y1="612" x2="1107.8" y2="780" stroke="#cfe3e0" stroke-width="0.7" stroke-opacity="0.35"/>
<line x1="1138.2" y1="612" x2="1140.6" y2="780" stroke="#cfe3e0" stroke-width="1.0" stroke-opacity="0.35"/>
<line x1="1153.4" y1="612" x2="1150.6" y2="780" stroke="#0f8f7c" stroke-width="1.4" stroke-opacity="0.50"/>
<line x1="1235.2" y1="612" x2="1233.9" y2="780" stroke="#187a70" stroke-width="1.4" stroke-opacity="0.50"/>
<line x1="1279.6" y1="612" x2="1282.3" y2="780" stroke="#1d8d80" stroke-width="0.7" stroke-opacity="0.25"/>
<line x1="1261.9" y1="612" x2="1261.8" y2="780" stroke="#cfe3e0" stroke-width="1.0" stroke-opacity="0.35"/>
<line x1="1254.8" y1="612" x2="1256.7" y2="780" stroke="#b9d0cd" stroke-width="0.7" stroke-opacity="0.35"/>
<line x1="1135.9" y1="612" x2="1134.7" y2="780" stroke="#1d8d80" stroke-width="1.4" stroke-opacity="0.25"/>
<line x1="1219.0" y1="612" x2="1221.2" y2="780" stroke="#187a70" stroke-width="1.0" stroke-opacity="0.35"/>
<line x1="1253.6" y1="612" x2="1251.1" y2="780" stroke="#0f8f7c" stroke-width="0.7" stroke-opacity="0.35"/>
<line x1="1247.6" y1="612" x2="1247.0" y2="780" stroke="#8fc4be" stroke-width="1.4" stroke-opacity="0.25"/>
</g>
<ellipse cx="1198.8" cy="719.0" rx="95.4" ry="43.6" transform="rotate(-12.0 1198.8 719.0)" fill="url(#gapw)"/>
<ellipse cx="1198.0" cy="710.8" rx="86.8" ry="64.6" transform="rotate(-12.0 1198.0 710.8)" fill="#1010e4"/>
<ellipse cx="1198.1" cy="711.5" rx="85.4" ry="63.5" transform="rotate(-12.0 1198.1 711.5)" fill="#1410e7"/>
<ellipse cx="1198.1" cy="712.3" rx="83.9" ry="62.4" transform="rotate(-12.0 1198.1 712.3)" fill="#1910eb"/>
<ellipse cx="1198.2" cy="713.1" rx="82.5" ry="61.3" transform="rotate(-12.0 1198.2 713.1)" fill="#1d10ee"/>
<ellipse cx="1198.3" cy="713.9" rx="81.1" ry="60.2" transform="rotate(-12.0 1198.3 713.9)" fill="#2410f0"/>
<ellipse cx="1198.3" cy="714.7" rx="79.6" ry="59.1" transform="rotate(-12.0 1198.3 714.7)" fill="#3010ee"/>
<ellipse cx="1198.4" cy="715.5" rx="78.2" ry="58.0" transform="rotate(-12.0 1198.4 715.5)" fill="#3b10ed"/>
<ellipse cx="1198.5" cy="716.3" rx="76.7" ry="56.9" transform="rotate(-12.0 1198.5 716.3)" fill="#4710ec"/>
<ellipse cx="1198.5" cy="717.1" rx="75.3" ry="55.8" transform="rotate(-12.0 1198.5 717.1)" fill="#5210eb"/>
<ellipse cx="1198.6" cy="717.9" rx="73.8" ry="54.8" transform="rotate(-12.0 1198.6 717.9)" fill="#5e10ea"/>
<ellipse cx="1198.7" cy="718.7" rx="72.4" ry="53.7" transform="rotate(-12.0 1198.7 718.7)" fill="#6a10e9"/>
<ellipse cx="1198.7" cy="719.5" rx="70.9" ry="52.6" transform="rotate(-12.0 1198.7 719.5)" fill="#7510e8"/>
<ellipse cx="1198.8" cy="720.3" rx="69.5" ry="51.5" transform="rotate(-12.0 1198.8 720.3)" fill="#8110e8"/>
<ellipse cx="1198.9" cy="721.1" rx="68.0" ry="50.4" transform="rotate(-12.0 1198.9 721.1)" fill="#8d10e7"/>
<ellipse cx="1198.9" cy="721.9" rx="66.6" ry="49.3" transform="rotate(-12.0 1198.9 721.9)" fill="#9810e6"/>
<ellipse cx="1199.0" cy="722.7" rx="65.2" ry="48.2" transform="rotate(-12.0 1199.0 722.7)" fill="#a211e7"/>
<ellipse cx="1199.1" cy="723.5" rx="63.7" ry="47.1" transform="rotate(-12.0 1199.1 723.5)" fill="#aa12e8"/>
<ellipse cx="1199.1" cy="724.3" rx="62.3" ry="46.0" transform="rotate(-12.0 1199.1 724.3)" fill="#b213e8"/>
<ellipse cx="1199.2" cy="725.1" rx="60.8" ry="44.9" transform="rotate(-12.0 1199.2 725.1)" fill="#ba15e9"/>
<ellipse cx="1199.3" cy="725.9" rx="59.4" ry="43.8" transform="rotate(-12.0 1199.3 725.9)" fill="#c216ea"/>
<ellipse cx="1199.3" cy="726.7" rx="57.9" ry="42.7" transform="rotate(-12.0 1199.3 726.7)" fill="#ca17eb"/>
<ellipse cx="1199.4" cy="727.5" rx="56.5" ry="41.6" transform="rotate(-12.0 1199.4 727.5)" fill="#d119ec"/>
<ellipse cx="1199.5" cy="728.3" rx="55.0" ry="40.5" transform="rotate(-12.0 1199.5 728.3)" fill="#d620ed"/>
<ellipse cx="1199.5" cy="729.1" rx="53.6" ry="39.4" transform="rotate(-12.0 1199.5 729.1)" fill="#db27ef"/>
<ellipse cx="1199.6" cy="729.9" rx="52.1" ry="38.3" transform="rotate(-12.0 1199.6 729.9)" fill="#e02ef0"/>
<ellipse cx="1199.7" cy="730.7" rx="50.7" ry="37.2" transform="rotate(-12.0 1199.7 730.7)" fill="#e535f1"/>
<ellipse cx="1199.8" cy="731.5" rx="49.2" ry="36.1" transform="rotate(-12.0 1199.8 731.5)" fill="#ea3cf2"/>
</g>
<ellipse cx="1191.3" cy="664.5" rx="144.0" ry="109.8" transform="rotate(-12.0 1191.3 664.5)" fill="url(#lit)"/>
<ellipse cx="1191.3" cy="664.5" rx="144.0" ry="109.8" transform="rotate(-12.0 1191.3 664.5)" fill="url(#lit2)"/>
<ellipse cx="1199.8" cy="731.5" rx="49.2" ry="36.1" transform="rotate(-12.0 1199.8 731.5)" fill="#c7c7c7"/>
<g font-family="Liberation Sans, sans-serif" font-size="9.6" fill="#222"><text x="882.3" y="802.4">Z</text><text x="877.8" y="811.2">X</text><text x="857.3" y="839.6">Y</text><path d="M890 824 L888.6 813" stroke="#4a4a4a" stroke-width="2.6" fill="none"/><path d="M885.3 815.5 L887.3 805.2 L891.4 814.6z" fill="#2b2f9a"/><rect x="882.6" y="811.6" width="2.6" height="4.6" fill="#a0432f"/><path d="M890 824 L876.5 828.6" stroke="#3c3c3c" stroke-width="2.2" fill="none"/><path d="M867.3 832.6 L876.6 826.4 L878.6 830.8z" fill="#2f8f3a"/></g>
<line x1="1586.5" y1="542" x2="1586.5" y2="855" stroke="#cdcdcd" stroke-width="1"/>
</svg>
<div id="left" class="abs">
<div class="abs" style="left:-6px;top:-10px;width:262px;height:23px;background:#9c9c9c;border-radius:9px;border-bottom:1px solid #8c8c8c"></div>
<div class="abs" style="left:16px;top:0;width:224px;height:6px;background:linear-gradient(#bcbcbc,#c9c9c9)"></div>
<div class="abs" style="left:187px;top:-3px;width:20px;height:5px;background:#3fd03f;border-radius:3px"></div>
<div class="abs" style="left:0;top:13px;width:256px;height:32px;background:#d5d5d5"></div>
<div class="t" style="left:8.3px;top:17.6px;font-size:16.1px;color:#111">Ready</div>
<div class="gb" style="left:-3px;top:59px;width:263px;height:119px;border-width:2px;border-color:#e9f0fa"></div>
<div class="t gl" style="left:0;top:54.5px;padding:0 4px 0 2.6px;background:#c8d5e9">Aktionen</div>
<div class="btn" style="left:3px;top:72px;width:86px;height:56px;font-size:14.5px;line-height:57.5px">Messen</div>
<div class="btn" style="left:103px;top:72px;width:56px;height:56px"></div>
<svg class="abs" style="left:106.5px;top:75.3px" width="50" height="50" viewBox="0 0 50 50"><defs><linearGradient id="sg" x1="0" y1="0" x2="0" y2="1"><stop offset="0" stop-color="#e8544c"/><stop offset=".4" stop-color="#ee2418"/><stop offset="1" stop-color="#f21a0a"/></linearGradient><clipPath id="oc"><polygon points="13.5,1.5 36.5,1.5 48.3,13.5 48.3,36.5 36.5,48.5 13.5,48.5 1.7,36.5 1.7,13.5"/></clipPath></defs><polygon points="13.5,1.5 36.5,1.5 48.3,13.5 48.3,36.5 36.5,48.5 13.5,48.5 1.7,36.5 1.7,13.5" fill="url(#sg)" stroke="#e0625c" stroke-width="1.2"/><ellipse cx="22" cy="4" rx="34" ry="17" fill="#fff" fill-opacity=".26" clip-path="url(#oc)"/><text x="4.6" y="32.3" font-family="Liberation Sans, sans-serif" font-weight="bold" font-size="19" fill="#fff4f0" textLength="40.5" lengthAdjust="spacingAndGlyphs">STOP</text></svg>
<div class="btn" style="left:172px;top:72px;width:85px;height:56px;font-size:14.5px;line-height:57.5px;letter-spacing:.75px">Kalibrieren</div>
<div class="btn" style="left:5px;top:141.3px;width:76px;height:26.7px;font-size:10.5px;line-height:25px;letter-spacing:.5px;border-radius:2px">Rezept speic</div>
<div class="btn" style="left:93px;top:141.3px;width:76px;height:26.7px;font-size:10.5px;line-height:25px;letter-spacing:.5px;border-radius:2px">Ergebnisse s</div>
<div class="gb" style="left:-3px;top:190px;width:263px;height:178px;border-width:2px;border-color:#e6edf8"></div>
<div class="t gl" style="left:0;top:184px;padding:0 4px 0 2.6px;background:#ccd8ea">Rezepte</div>
<div class="abs" style="left:1px;top:197px;width:255px;height:168px;background:#f5f3f2;border:1px solid #8fa0bd;border-top-color:#aab7cd"></div>
<div class="abs" style="left:2px;top:198px;width:253px;height:24px;background:linear-gradient(#fff,#fafafa 50%,#f1f1f1);border-bottom:1px solid #e3e3e3"></div>
<div class="abs" style="left:92px;top:198px;width:1px;height:24px;background:#e2e2e2"></div>
<div class="abs" style="left:165px;top:198px;width:1px;height:24px;background:#e2e2e2"></div>
<div class="t" style="left:11px;top:205px;font-size:12.5px">Name</div>
<div class="t" style="left:98px;top:205px;font-size:12.5px">Datum</div>
<div class="abs" style="left:2px;top:223px;width:253px;height:22px;background:#fff"></div>
<div class="abs" style="left:6px;top:223px;width:160px;height:22px;background:#90ee90"></div>
<div class="abs" style="left:2px;top:246px;width:253px;height:22px;background:#f1f0f0"></div>
<div class="abs" style="left:2px;top:268px;width:253px;height:22px;background:#fff"></div>
<div class="t" style="left:9px;top:228px;font-size:15px;color:#063006">Kiffe default</div>
<div class="t" style="left:96px;top:226.5px;font-size:13px;color:#103810">2018-09-18</div>
<div class="t" style="left:9px;top:250.5px;font-size:15px">[System]</div>
<div class="t" style="left:96px;top:249px;font-size:13px">2018-09-18</div>
<div class="t" style="left:9px;top:271px;font-size:15px">..</div>
<div class="t" style="left:96px;top:271.5px;font-size:13px">2018-09-18</div>
<div class="gb" style="left:-3px;top:381px;width:263px;height:274px;border-color:#f4f7fb;border-width:2px"></div>
<div class="t gl" style="left:0;top:375px;padding:0 4px 0 2.6px;background:#e6ecf6">Benutzerwerte</div>
<div class="abs" style="left:5px;top:393px;width:245px;height:253px;background:#fff;border:1px solid #9d9d9d"></div>
<div class="abs" style="left:6px;top:394px;width:243px;height:20px;background:linear-gradient(#fff,#f6f6f6);border-bottom:1px solid #dcdcdc"></div>
<div class="abs" style="left:136px;top:394px;width:1px;height:20px;background:#e4e4e4"></div>
<div class="abs" style="left:242px;top:394px;width:1px;height:20px;background:#e4e4e4"></div>
<div class="t" style="left:6px;width:131px;text-align:center;top:399px;font-size:11px">Beschreibung</div>
<div class="t" style="left:137px;width:105px;text-align:center;top:399px;font-size:11px">Benutzerwerte</div>
<div class="abs" style="left:6px;top:415px;width:243px;height:24px;background:linear-gradient(#f3f3f3,#e2e2e2 45%,#d6d6d6 55%,#e6e6e6)"></div>
<div class="t" style="left:15px;top:422.0px;font-size:11px;letter-spacing:.25px">Kunde</div>
<div class="cmb" style="top:416.5px"><i></i></div>
<div class="t" style="left:15px;top:447.6px;font-size:11px;letter-spacing:.25px">Kunden Beleg Nr</div>
<div class="cmb" style="top:442.1px"><i></i></div>
<div class="t" style="left:15px;top:473.2px;font-size:11px;letter-spacing:.25px">Teile Bennenung</div>
<div class="cmb" style="top:467.7px"><i></i></div>
<div class="t" style="left:15px;top:498.8px;font-size:11px;letter-spacing:.25px">Zeichnungsnummer</div>
<div class="cmb" style="top:493.3px"><i></i></div>
<div class="t" style="left:15px;top:524.4px;font-size:11px;letter-spacing:.25px">Teil</div>
<div class="cmb" style="top:518.9px"><i></i></div>
<div class="t" style="left:15px;top:550.0px;font-size:11px;letter-spacing:.25px">Kiffe Artikel Nummer</div>
<div class="cmb" style="top:544.5px"><i></i></div>
<div class="t" style="left:15px;top:575.6px;font-size:11px;letter-spacing:.25px">Kiffe Vorgangsnummer</div>
<div class="cmb" style="top:570.1px"><i></i></div>
<div class="t" style="left:15px;top:601.2px;font-size:11px;letter-spacing:.25px">Sollwert</div>
<div class="cmb" style="top:595.7px"><i></i></div>
<div class="t" style="left:15px;top:626.8px;font-size:11px;letter-spacing:.25px">Prüfer</div>
<div class="cmb" style="top:621.3px"><i></i></div>
<div class="gb" style="left:-3px;top:667px;width:263px;height:59px;border-color:#ececec"></div>
<div class="t gl" style="left:0;top:661.5px;padding:0 4px 0 2.6px;background:#fdfdfd">Teilebeschreibung</div>
<div class="t" style="left:5px;top:690.5px;font-size:10.9px">Teilgröße</div>
<div class="tb" style="left:58px;top:686.5px;width:53px;height:22px;padding:3px 0 0 3px;font-size:11.5px">50</div>
<div class="t" style="left:121.5px;top:690.5px;font-size:10.9px">Bereich</div>
<div class="abs" style="left:165px;top:679px;width:57px;height:37px;background:#e6e6e6;border:1px solid #adadad"></div>
<div class="t" style="left:172.5px;top:684px;font-size:11.5px;font-weight:bold">Glatt</div>
<div class="t" style="left:172.5px;top:699.5px;font-size:11px">2.35</div>
<div class="abs" style="left:209px;top:692px;width:6px;height:6px;border-right:1.4px solid #333;border-bottom:1.4px solid #333;transform:rotate(45deg) scale(.85)"></div>
<div class="gb" style="left:-3px;top:736px;width:263px;height:130px;border-color:#ececec"></div>
<div class="t gl" style="left:0;top:730.5px;padding:0 4px 0 2.6px;background:#fff">Messparameter</div>
<div class="t" style="left:0;width:105px;text-align:right;top:756.1px;font-size:10.8px">Schwelle</div>
<div class="tb" style="left:113px;top:752.0px;width:39px;height:17px;padding:3px 0 0 3px;font-size:11.5px">45</div>
<div class="t" style="left:160px;top:756.1px;font-size:11px">%</div>
<div class="t" style="left:0;width:105px;text-align:right;top:780.8px;font-size:10.8px">Ausschluss aussen</div>
<div class="tb" style="left:113px;top:776.7px;width:39px;height:17px;padding:3px 0 0 3px;font-size:11.5px">0,1</div>
<div class="t" style="left:160px;top:780.8px;font-size:11px">mm</div>
<div class="t" style="left:0;width:105px;text-align:right;top:805.5px;font-size:10.8px">Ausschluss innen</div>
<div class="tb" style="left:113px;top:801.4px;width:39px;height:17px;padding:3px 0 0 3px;font-size:11.5px">0,1</div>
<div class="t" style="left:160px;top:805.5px;font-size:11px">mm</div>
<div class="t" style="left:0;width:105px;text-align:right;top:830.2px;font-size:10.8px">Geradheit Gauss</div>
<div class="tb" style="left:113px;top:826.1px;width:39px;height:17px;padding:3px 0 0 3px;font-size:11.5px">0,8</div>
<div class="t" style="left:160px;top:830.2px;font-size:11px">mm</div>
</div>
<div class="abs" style="left:260px;top:45px;width:4px;height:620px;background:rgba(255,255,255,.32)"></div>
<div class="abs" style="left:264px;top:0;width:18px;height:855px;background:#f3f3f3"></div>
<div class="abs" style="left:264px;top:81px;width:16px;height:762px;background:#cdcdcd"></div>
<div class="abs" style="left:280px;top:0;width:2px;height:855px;background:#fbfbfb"></div>
<svg class="abs" style="left:264px;top:0" width="16" height="14"><path d="M4.2 6.2 L8 2.2 L11.8 6.2" fill="none" stroke="#b0b0b0" stroke-width="1.5"/></svg>
<svg class="abs" style="left:264px;top:846px" width="16" height="12"><path d="M4.2 5.6 L8 9.4 L11.8 5.6" fill="none" stroke="#a4a4a4" stroke-width="1.5"/></svg>
<div class="abs" style="left:282px;top:0;width:2px;height:855px;background:linear-gradient(to right,#9b9b9b,#b5b5b5)"></div>
</div></body></html>
